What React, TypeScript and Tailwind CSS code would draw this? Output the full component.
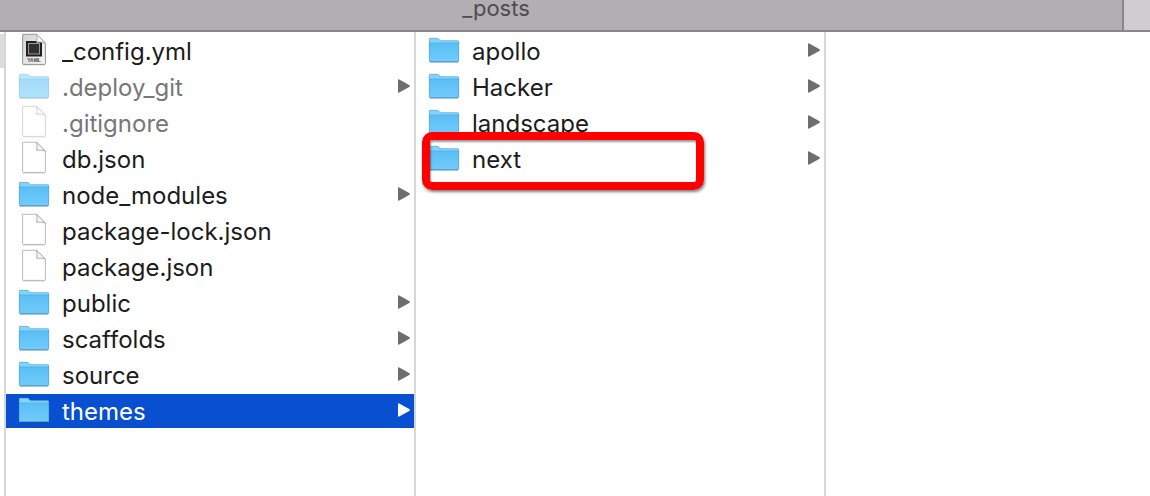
import { useState } from "react";

type Entry = {
  name: string;
  kind: "folder" | "file" | "yaml";
  hidden?: boolean;
  marked?: boolean;
};

const projectFiles: Entry[] = [
  { name: "_config.yml", kind: "yaml" },
  { name: ".deploy_git", kind: "folder", hidden: true },
  { name: ".gitignore", kind: "file", hidden: true },
  { name: "db.json", kind: "file" },
  { name: "node_modules", kind: "folder" },
  { name: "package-lock.json", kind: "file" },
  { name: "package.json", kind: "file" },
  { name: "public", kind: "folder" },
  { name: "scaffolds", kind: "folder" },
  { name: "source", kind: "folder" },
  { name: "themes", kind: "folder" },
];

const themeFolders: Entry[] = [
  { name: "apollo", kind: "folder" },
  { name: "Hacker", kind: "folder" },
  { name: "landscape", kind: "folder" },
  { name: "next", kind: "folder", marked: true },
];

const FolderIcon = () => (
  <svg width="32" height="28" viewBox="0 0 32 28" aria-hidden="true">
    <defs>
      <linearGradient id="folder-front" x1="0" y1="0" x2="0" y2="1">
        <stop offset="0" stopColor="#5abff6" />
        <stop offset="1" stopColor="#72cbfb" />
      </linearGradient>
    </defs>
    <path d="M2 26.4h28" stroke="#000" strokeOpacity="0.18" strokeWidth="1.4" />
    <path
      d="M1 3.4Q1 2 2.4 2h6.8q.8 0 1.3.6l1.2 1.2q.5.6 1.3.6h16.6q1.4 0 1.4 1.4v18.8q0 1.4-1.4 1.4H2.4Q1 26 1 24.600z"
      fill="#85d3fa"
    />
    <path d="M1 7h30v17.6q0 1.4-1.4 1.4H2.4Q1 26 1 24.6z" fill="url(#folder-front)" />
    <path d="M1 7h30" stroke="#4baee0" strokeWidth="0.7" />
    <path
      d="M1.3 3.4q0-1.1 1.1-1.100h6.8q.7 0 1.100.5l1.300 1.300q.5.600 1.400.600h16.600q1.100 0 1.100 1.100v18.800q0 1.100-1.100 1.100H2.400q-1.100 0-1.100-1.100z"
      fill="none"
      stroke="#429bcc"
      strokeWidth="0.5"
    />
    <path d="M2 25.7h28" stroke="#4098c8" strokeWidth="0.7" />
  </svg>
);

const FileIcon = ({ yaml = false }: { yaml?: boolean }) => (
  <svg width="32" height="34" viewBox="0 0 32 34" aria-hidden="true">
    <defs>
      <linearGradient id="yaml-page" x1="0" y1="0" x2="1" y2="1">
        <stop offset="0" stopColor="#d4d4d4" />
        <stop offset="1" stopColor="#f6f6f6" />
      </linearGradient>
    </defs>
    <path d="M5 31.7h22" stroke="#000" strokeOpacity="0.2" strokeWidth="1.4" />
    <path
      d="M5 1.300h13.500L27.400 10V30.500q0 .9-.9.9h-21q-.9 0-.9-.9V1.700q0-.4.4-.4z"
      fill={yaml ? "url(#yaml-page)" : "#fff"}
      stroke={yaml ? "#8c8c8c" : "#b0b0b0"}
      strokeWidth="0.9"
    />
    {yaml && (
      <>
        <rect x="8" y="8" width="16" height="15.500" fill="#202020" />
        <rect x="10.500" y="10.500" width="11" height="10.500" fill="#303030" stroke="#a8a8a8" strokeWidth="0.9" />
        <text
          x="16"
          y="29"
          textAnchor="middle"
          fontFamily="Liberation Sans, sans-serif"
          fontSize="5"
          fontWeight="700"
          fill="#444"
        >
          YAML
        </text>
      </>
    )}
    <path
      d="M18.500 1.300q1 4.500.2 8 4.200-.8 8.700.7z"
      fill="#f7f7f7"
      stroke="#a6a6a6"
      strokeWidth="0.9"
      strokeLinejoin="round"
    />
  </svg>
);

const Arrow = () => (
  <svg width="12" height="14" viewBox="0 0 12 14" fill="currentColor" aria-hidden="true">
    <path d="M0 1Q0-.1 1.2.4l10 5.700q1.400.9 0 1.800l-10 5.700Q0 14.100 0 13z" />
  </svg>
);

type RowProps = {
  entry: Entry;
  selected: boolean;
  onSelect: () => void;
};

const Row = ({ entry, selected, onSelect }: RowProps) => (
  <li className="relative">
    <button
      type="button"
      onClick={onSelect}
      className={`flex h-[34px] w-full items-center pl-3 pr-1 text-left ${
        selected ? "bg-[#0850d0] text-white" : "text-[#1c1c1c]"
      }`}
    >
      <span className={`w-8 shrink-0 pb-0.5 ${entry.hidden ? "opacity-55" : ""}`}>
        {entry.kind === "folder" ? <FolderIcon /> : <FileIcon yaml={entry.kind === "yaml"} />}
      </span>
      <span className={`ml-3 flex-1 truncate pt-0.5 leading-8 ${entry.hidden ? "text-[#777]" : ""}`}>
        {entry.name}
      </span>
      {entry.kind === "folder" && (
        <span className={`pb-0.5 ${selected ? "text-white" : "text-[#6d6d6d]"}`}>
          <Arrow />
        </span>
      )}
    </button>
    {entry.marked && (
      <div className="pointer-events-none absolute -top-2.5 left-1.5 h-[58px] w-[282px] rounded-[10px] border-8 border-[#fe0000] shadow-[1px_2px_3px_rgba(0,0,0,0.5),inset_1px_2px_2px_rgba(0,0,0,0.4)]" />
    )}
  </li>
);

type ColumnProps = {
  entries: Entry[];
  selected: string;
  onSelect: (name: string) => void;
};

const Column = ({ entries, selected, onSelect }: ColumnProps) => (
  <ul className="flex w-[410px] shrink-0 flex-col gap-0.5 border-r-2 border-[#d7d7d7] pt-0.5">
    {entries.map((entry) => (
      <Row
        key={entry.name}
        entry={entry}
        selected={entry.name === selected}
        onSelect={() => onSelect(entry.name)}
      />
    ))}
  </ul>
);

const App = () => {
  const [selected, setSelected] = useState("themes");
  const [selectedTheme, setSelectedTheme] = useState("");

  return (
    <main className="flex min-h-screen flex-col bg-white font-['Inter',sans-serif] text-2xl">
      <header className="flex h-8 border-b-2 border-[#878688]">
        <button
          type="button"
          className="flex flex-1 items-start justify-center border-r-2 border-[#878688] bg-[#b1afb1] pr-[130px] text-[22px] leading-4 text-[#4d4c4d]"
        >
          _posts
        </button>
        <div className="w-[26px] bg-[#cfcdcf]" />
      </header>

      <div className="flex flex-1">
        <div className="w-1.5 shrink-0 border-r-2 border-[#d7d7d7] pt-0.5">
          <div className="h-[34px] bg-[#dcdcdc]" />
        </div>
        <Column entries={projectFiles} selected={selected} onSelect={setSelected} />
        <Column entries={themeFolders} selected={selectedTheme} onSelect={setSelectedTheme} />
        <div className="flex-1" />
      </div>
    </main>
  );
};

export default App;
